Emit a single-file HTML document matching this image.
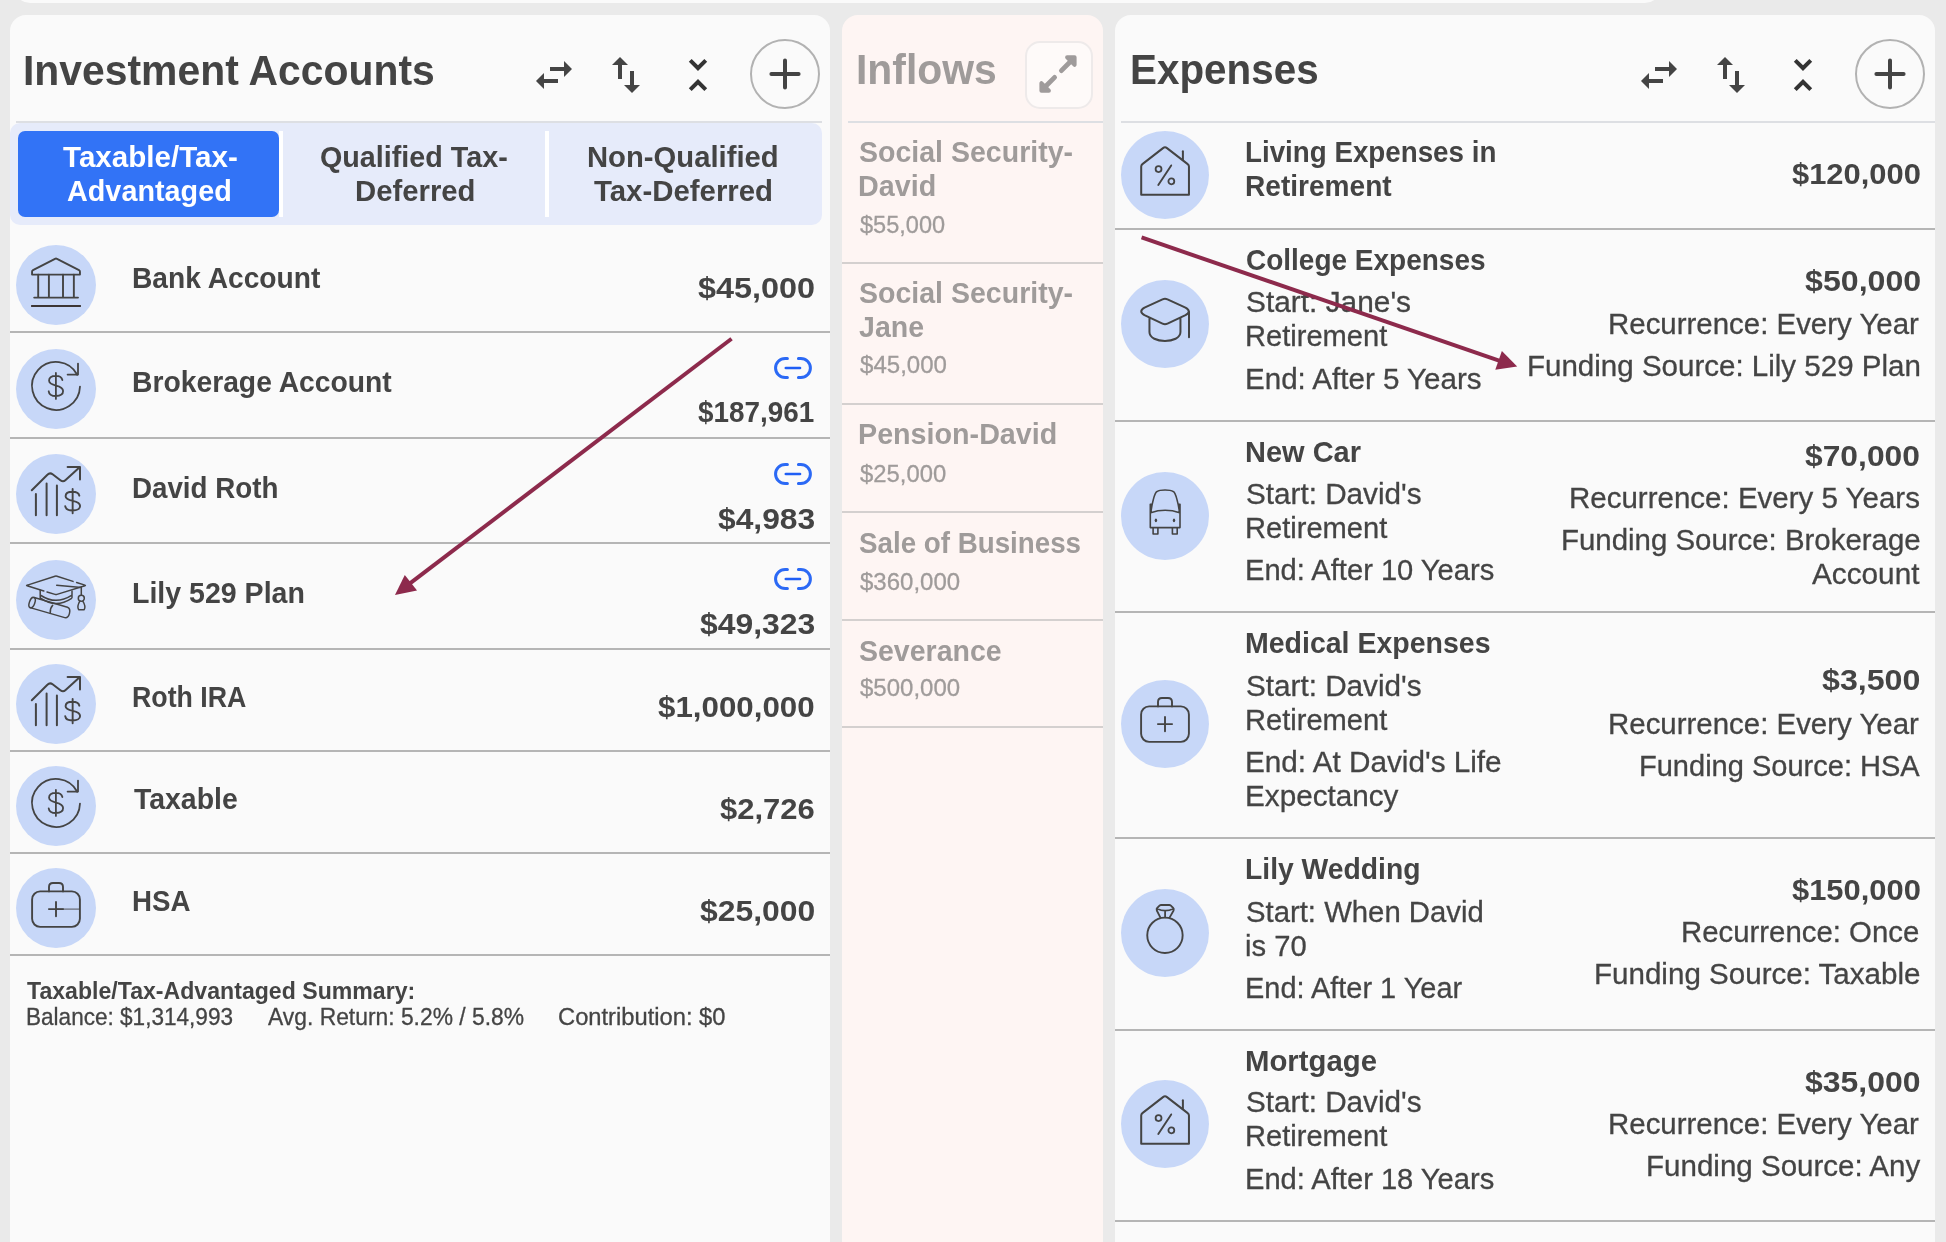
<!DOCTYPE html>
<html><head><meta charset="utf-8"><title>Plan</title>
<style>
html,body{margin:0;padding:0}
body{width:1946px;height:1242px;overflow:hidden;background:#eaeaea;font-family:"Liberation Sans",sans-serif;position:relative}
.t{position:absolute;white-space:nowrap;line-height:1}
.r{-webkit-text-stroke:0.3px}
#tx{position:absolute;left:0;top:0;width:1946px;height:1242px;will-change:transform}
.a{position:absolute}
.sep{position:absolute;height:2px;background:#b5b5b5}
.sep2{position:absolute;height:2px;background:#d4d0cf}
.hd{position:absolute;height:2px;background:#dddfe3}
.c{position:absolute;border-radius:50%;background:#c7d7f8}
svg{position:absolute;overflow:visible}
</style></head><body>
<div class="a" style="left:14px;top:-30px;width:1647px;height:33px;background:#fafafa;border-radius:0 0 16px 16px"></div>
<div class="a" style="left:10px;top:15px;width:820px;height:1260px;background:#fafafa;border-radius:16px"></div>
<div class="a" style="left:842px;top:15px;width:261px;height:1260px;background:#fef5f3;border-radius:16px"></div>
<div class="a" style="left:1115px;top:15px;width:820px;height:1260px;background:#fafafa;border-radius:16px"></div>
<div class="hd" style="left:16px;top:121px;width:806px"></div>
<div class="hd" style="left:848px;top:121px;width:255px"></div>
<div class="hd" style="left:1121px;top:121px;width:814px"></div>
<div class="a" style="left:10px;top:123px;width:812px;height:102px;background:#e6ebfa;border-radius:10px"></div>
<div class="a" style="left:18px;top:131px;width:261px;height:86px;background:#3273f6;border-radius:7px"></div>
<div class="a" style="left:279px;top:131px;width:4px;height:86px;background:#fff"></div>
<div class="a" style="left:545px;top:131px;width:4px;height:86px;background:#fff"></div>
<div class="sep" style="left:10px;top:331px;width:820px"></div>
<div class="sep" style="left:10px;top:437px;width:820px"></div>
<div class="sep" style="left:10px;top:542px;width:820px"></div>
<div class="sep" style="left:10px;top:648px;width:820px"></div>
<div class="sep" style="left:10px;top:750px;width:820px"></div>
<div class="sep" style="left:10px;top:852px;width:820px"></div>
<div class="sep" style="left:10px;top:954px;width:820px"></div>
<div class="sep2" style="left:842px;top:262px;width:261px"></div>
<div class="sep2" style="left:842px;top:403px;width:261px"></div>
<div class="sep2" style="left:842px;top:511px;width:261px"></div>
<div class="sep2" style="left:842px;top:619px;width:261px"></div>
<div class="sep2" style="left:842px;top:726px;width:261px"></div>
<div class="sep" style="left:1115px;top:228px;width:820px"></div>
<div class="sep" style="left:1115px;top:420px;width:820px"></div>
<div class="sep" style="left:1115px;top:611px;width:820px"></div>
<div class="sep" style="left:1115px;top:837px;width:820px"></div>
<div class="sep" style="left:1115px;top:1029px;width:820px"></div>
<div class="sep" style="left:1115px;top:1220px;width:820px"></div>
<svg style="left:530px;top:51px" width="48" height="48" viewBox="0 0 24 24"><path fill="#444" d="M6.99 11L3 15l3.99 4v-3H14v-2H6.99v-3zM21 9l-3.99-4v3H10v2h7.01v3L21 9z"/></svg>
<svg style="left:602px;top:51px" width="48" height="48" viewBox="0 0 24 24"><path fill="#444" d="M16 17.01V10h-2v7.01h-3L15 21l4-3.99h-3zM9 3L5 6.99h3V14h2V6.99h3L9 3z"/></svg>
<svg style="left:674px;top:51px" width="48" height="48" viewBox="0 0 24 24"><path fill="#333" d="M7.41 18.59L8.83 20 12 16.83 15.17 20l1.41-1.41L12 14l-4.59 4.59zm9.18-13.18L15.17 4 12 7.17 8.83 4 7.41 5.41 12 10l4.59-4.59z"/></svg>
<div class="a" style="left:750px;top:39px;width:70px;height:70px;box-sizing:border-box;border:2px solid #b2b2b2;border-radius:50%"></div>
<svg style="left:761px;top:50px" width="48" height="48" viewBox="-24 -24 48 48"><path d="M-13.6 0H13.6M0 -13.6V13.6" stroke="#444" stroke-width="4" stroke-linecap="round" fill="none"/></svg>
<svg style="left:1635px;top:51px" width="48" height="48" viewBox="0 0 24 24"><path fill="#444" d="M6.99 11L3 15l3.99 4v-3H14v-2H6.99v-3zM21 9l-3.99-4v3H10v2h7.01v3L21 9z"/></svg>
<svg style="left:1707px;top:51px" width="48" height="48" viewBox="0 0 24 24"><path fill="#444" d="M16 17.01V10h-2v7.01h-3L15 21l4-3.99h-3zM9 3L5 6.99h3V14h2V6.99h3L9 3z"/></svg>
<svg style="left:1779px;top:51px" width="48" height="48" viewBox="0 0 24 24"><path fill="#333" d="M7.41 18.59L8.83 20 12 16.83 15.17 20l1.41-1.41L12 14l-4.59 4.59zm9.18-13.18L15.17 4 12 7.17 8.83 4 7.41 5.41 12 10l4.59-4.59z"/></svg>
<div class="a" style="left:1855px;top:39px;width:70px;height:70px;box-sizing:border-box;border:2px solid #b2b2b2;border-radius:50%"></div>
<svg style="left:1866px;top:50px" width="48" height="48" viewBox="-24 -24 48 48"><path d="M-13.6 0H13.6M0 -13.6V13.6" stroke="#444" stroke-width="4" stroke-linecap="round" fill="none"/></svg>
<div class="a" style="left:1025px;top:41px;width:68px;height:68px;box-sizing:border-box;border:2.5px solid #eeeaea;border-radius:15px;background:#fefaf9"></div>
<svg style="left:1034.2px;top:50.150000000000006px" width="48" height="48" viewBox="-24 -24 48 48"><path d="M3.4 -3.4L13 -13M-3.4 3.4L-13 13" stroke="#9f9b9b" stroke-width="4.8" stroke-linecap="round" fill="none"/><path d="M16.6 -16.7H9.1L16.6 -9.2ZM-16.6 16.7H-9.1L-16.6 9.2Z" fill="#9f9b9b" stroke="#9f9b9b" stroke-width="4" stroke-linejoin="round"/></svg>
<div class="c" style="left:16px;top:245px;width:80px;height:80px"></div>
<svg style="left:16px;top:245px" width="80" height="80" viewBox="-40 -40 80 80"><path d="M-23.95 -10.4V-13.2Q-23.95 -14.3 -23 -14.8L-1 -26.2Q0 -26.7 1 -26.2L23 -14.8Q23.95 -14.3 23.95 -13.2V-10.4Z" stroke="#444" stroke-width="1.9" fill="none" stroke-linecap="round" stroke-linejoin="round"/><path d="M-17.8 -10.4V12.6M-7.1 -10.4V12.6M7 -10.4V12.6M17.85 -10.4V12.6M-21.8 12.6H22" stroke="#444" stroke-width="1.9" fill="none" stroke-linecap="round" stroke-linejoin="round" stroke-linecap="butt"/><path d="M-24.9 21H24.9" stroke="#3c3535" stroke-width="2" fill="none"/></svg>
<div class="c" style="left:16px;top:349px;width:80px;height:80px"></div>
<svg style="left:16px;top:349px" width="80" height="80" viewBox="-40 -40 80 80"><path d="M23.99 -2.47A24 24 0 1 1 21.25 -14.26" stroke="#444" stroke-width="1.8" fill="none" stroke-linecap="round" stroke-linejoin="round"/><path d="M22 -25.4V-14.4H11.6" stroke="#444" stroke-width="1.8" fill="none" stroke-linecap="round" stroke-linejoin="round"/><g transform="translate(-0.1,-3.1)"><path d="M6.48 -5.88C5.85 -8.82 3.42 -10.08 0 -10.08C-4.14 -10.08 -6.84 -8.23 -6.84 -5.38C-6.84 -2.52 -4.14 -1.34 0 -0.34C4.32 0.67 7.20 1.85 7.20 5.21C7.20 8.23 4.32 10.08 0 10.08C-4.14 10.08 -6.84 8.40 -7.20 5.38M0 -13.02V13.02" stroke="#444" stroke-width="1.8" fill="none" stroke-linecap="round" stroke-linejoin="round"/></g></svg>
<div class="c" style="left:16px;top:454px;width:80px;height:80px"></div>
<svg style="left:16px;top:454px" width="80" height="80" viewBox="-40 -40 80 80"><path d="M-24.2 -3.7L-8.6 -19.3Q-6.1 -21.8 -3.4 -19.7L4.4 -13.7Q7.1 -11.6 9.6 -13.9L23.6 -26.8M11.6 -27.1H24V-14.5M-20.1 0V21.2M-9.4 -10.5V21.2M0.9 -8.4V21.2" stroke="#444" stroke-width="2" fill="none" stroke-linecap="round" stroke-linejoin="round"/><g transform="translate(16.65,7.15)"><path d="M6.70 -5.46C6.04 -8.19 3.53 -9.36 0 -9.36C-4.28 -9.36 -7.07 -7.64 -7.07 -4.99C-7.07 -2.34 -4.28 -1.25 0 -0.31C4.46 0.62 7.44 1.72 7.44 4.84C7.44 7.64 4.46 9.36 0 9.36C-4.28 9.36 -7.07 7.80 -7.44 4.99M0 -12.09V12.09" stroke="#444" stroke-width="1.9" fill="none" stroke-linecap="round" stroke-linejoin="round"/></g></svg>
<div class="c" style="left:16px;top:560px;width:80px;height:80px"></div>
<svg style="left:16px;top:560px" width="80" height="80" viewBox="-40 -40 80 80"><path d="M-29.3 -14.6L-1 -23.8Q0 -24.1 1 -23.8L17 -18.6M20.6 -17.5L28.9 -14.9Q29.9 -14.6 28.9 -14.3L1 -5.6Q0 -5.3 -1 -5.6L-9 -8M-12.2 -9L-28.9 -14.3Q-29.9 -14.6 -28.9 -14.9" stroke="#444" stroke-width="1.5" fill="none" stroke-linecap="round" stroke-linejoin="round"/><path d="M0.7 -14.7L25.3 -12.6V-4.7" stroke="#444" stroke-width="1.5" fill="none" stroke-linecap="round" stroke-linejoin="round"/><circle cx="25.3" cy="-1.7" r="3" stroke="#444" stroke-width="1.5" fill="none" stroke-linecap="round" stroke-linejoin="round"/><path d="M23.8 1.2C21.6 5 21.6 8 22.6 9.7H28.2C29.2 8 29.2 5 26.8 1.2" stroke="#444" stroke-width="1.5" fill="none" stroke-linecap="round" stroke-linejoin="round"/><path d="M-15.8 -9.7V-0.9M16 -8.9V-2.5M-15 -4.5Q0 5.3 16 -4.9M-15 -1.7Q0 8.7 15.6 -1.7" stroke="#444" stroke-width="1.5" fill="none" stroke-linecap="round" stroke-linejoin="round"/><path d="M-21.8 -2.5L11.5 7.2C15.6 8.5 13.6 19 8.75 17.6L-25.9 7.6" stroke="#444" stroke-width="1.5" fill="none" stroke-linecap="round" stroke-linejoin="round"/><ellipse cx="-23.9" cy="2.6" rx="2.7" ry="5.4" transform="rotate(20 -23.9 2.6)" stroke="#444" stroke-width="1.5" fill="none" stroke-linecap="round" stroke-linejoin="round"/><path d="M-3.3 5.2Q-6.2 8.5 -5.7 12.8" stroke="#444" stroke-width="1.5" fill="none" stroke-linecap="round" stroke-linejoin="round"/></svg>
<div class="c" style="left:16px;top:664px;width:80px;height:80px"></div>
<svg style="left:16px;top:664px" width="80" height="80" viewBox="-40 -40 80 80"><path d="M-24.2 -3.7L-8.6 -19.3Q-6.1 -21.8 -3.4 -19.7L4.4 -13.7Q7.1 -11.6 9.6 -13.9L23.6 -26.8M11.6 -27.1H24V-14.5M-20.1 0V21.2M-9.4 -10.5V21.2M0.9 -8.4V21.2" stroke="#444" stroke-width="2" fill="none" stroke-linecap="round" stroke-linejoin="round"/><g transform="translate(16.65,7.15)"><path d="M6.70 -5.46C6.04 -8.19 3.53 -9.36 0 -9.36C-4.28 -9.36 -7.07 -7.64 -7.07 -4.99C-7.07 -2.34 -4.28 -1.25 0 -0.31C4.46 0.62 7.44 1.72 7.44 4.84C7.44 7.64 4.46 9.36 0 9.36C-4.28 9.36 -7.07 7.80 -7.44 4.99M0 -12.09V12.09" stroke="#444" stroke-width="1.9" fill="none" stroke-linecap="round" stroke-linejoin="round"/></g></svg>
<div class="c" style="left:16px;top:766px;width:80px;height:80px"></div>
<svg style="left:16px;top:766px" width="80" height="80" viewBox="-40 -40 80 80"><path d="M23.99 -2.47A24 24 0 1 1 21.25 -14.26" stroke="#444" stroke-width="1.8" fill="none" stroke-linecap="round" stroke-linejoin="round"/><path d="M22 -25.4V-14.4H11.6" stroke="#444" stroke-width="1.8" fill="none" stroke-linecap="round" stroke-linejoin="round"/><g transform="translate(-0.1,-3.1)"><path d="M6.48 -5.88C5.85 -8.82 3.42 -10.08 0 -10.08C-4.14 -10.08 -6.84 -8.23 -6.84 -5.38C-6.84 -2.52 -4.14 -1.34 0 -0.34C4.32 0.67 7.20 1.85 7.20 5.21C7.20 8.23 4.32 10.08 0 10.08C-4.14 10.08 -6.84 8.40 -7.20 5.38M0 -13.02V13.02" stroke="#444" stroke-width="1.8" fill="none" stroke-linecap="round" stroke-linejoin="round"/></g></svg>
<div class="c" style="left:16px;top:868px;width:80px;height:80px"></div>
<svg style="left:16px;top:868px" width="80" height="80" viewBox="-40 -40 80 80"><rect x="-23.9" y="-16.6" width="47.8" height="35.45" rx="8" stroke="#444" stroke-width="1.9" fill="none" stroke-linecap="round" stroke-linejoin="round"/><path d="M-7 -16.6V-21.0Q-7 -25.0 -3 -25.0H3Q7 -25.0 7 -21.0V-16.6M-7.1 1.1H7.1M0 -6.0V8.2" stroke="#444" stroke-width="1.9" fill="none" stroke-linecap="round" stroke-linejoin="round"/><path d="M0 1.1H23.9" stroke="#444" stroke-width="0.9"/></svg>
<div class="c" style="left:1121px;top:131px;width:88px;height:88px"></div>
<svg style="left:1121px;top:131px" width="88" height="88" viewBox="-44 -44 88 88"><path d="M-23.8 19.85V-8.6Q-23.8 -10 -22.6 -10.9L-2 -26.9Q0 -28.4 2 -26.9L22.7 -10.9Q23.95 -10 23.95 -8.6V19.85Z" stroke="#444" stroke-width="2" fill="none" stroke-linecap="round" stroke-linejoin="round" stroke-linejoin="miter"/><path d="M17.9 -23.7V-15" stroke="#444" stroke-width="2" fill="none" stroke-linecap="round" stroke-linejoin="round"/><circle cx="-6.45" cy="-5.9" r="2.95" stroke="#444" stroke-width="1.8" fill="none" stroke-linecap="round" stroke-linejoin="round"/><circle cx="6.35" cy="6.35" r="2.95" stroke="#444" stroke-width="1.8" fill="none" stroke-linecap="round" stroke-linejoin="round"/><path d="M6.2 -9.6L-6.7 9.9" stroke="#444" stroke-width="1.9" fill="none" stroke-linecap="round" stroke-linejoin="round"/></svg>
<div class="c" style="left:1121px;top:280px;width:88px;height:88px"></div>
<svg style="left:1121px;top:280px" width="88" height="88" viewBox="-44 -44 88 88"><path d="M-2.5 -24.7L-20.5 -16.3Q-27 -12.6 -20.5 -8.9L-2.5 -0.3Q0 0.9 2.5 -0.3L20.5 -8.9Q27 -12.6 20.5 -16.3L2.5 -24.7Q0 -25.9 -2.5 -24.7Z M-15.55 -6.3V8C-15.55 20 15.45 20 15.45 8V-6.3 M24 -12.5V13.2" stroke="#444" stroke-width="2" fill="none" stroke-linecap="round" stroke-linejoin="round"/></svg>
<div class="c" style="left:1121px;top:472px;width:88px;height:88px"></div>
<svg style="left:1121px;top:472px" width="88" height="88" viewBox="-44 -44 88 88"><path d="M-14.7 -11.7V11.6H15V-11.7 M-14.7 -11.7H-13L-14.3 -5.5 M15 -11.7H13.3L14.6 -5.5 M-14 -4C-13.5 -10 -10.5 -23.6 -8 -24.4C-5 -26.5 5 -26.5 8.3 -24.4C10.8 -23.6 13.8 -10 14.4 -4 M-14.3 -3.3Q0.15 -8.1 14.65 -3.3 M-11.9 11.6V18H-7.1V11.6 M7.4 11.6V18H12.2V11.6" stroke="#444" stroke-width="1.6" fill="none" stroke-linecap="round" stroke-linejoin="round"/><ellipse cx="-9.1" cy="4.35" rx="1.2" ry="1.9" fill="#444"/><ellipse cx="9" cy="4.35" rx="1.2" ry="1.9" fill="#444"/></svg>
<div class="c" style="left:1121px;top:680px;width:88px;height:88px"></div>
<svg style="left:1121px;top:680px" width="88" height="88" viewBox="-44 -44 88 88"><rect x="-23.9" y="-17.6" width="47.8" height="35.45" rx="8" stroke="#444" stroke-width="1.9" fill="none" stroke-linecap="round" stroke-linejoin="round"/><path d="M-7 -17.6V-22.0Q-7 -26.0 -3 -26.0H3Q7 -26.0 7 -22.0V-17.6M-7.1 0.1H7.1M0 -7.0V7.2" stroke="#444" stroke-width="1.9" fill="none" stroke-linecap="round" stroke-linejoin="round"/></svg>
<div class="c" style="left:1121px;top:889px;width:88px;height:88px"></div>
<svg style="left:1121px;top:889px" width="88" height="88" viewBox="-44 -44 88 88"><circle cx="-0.05" cy="2.3" r="17.7" stroke="#444" stroke-width="1.9" fill="none" stroke-linecap="round" stroke-linejoin="round"/><path d="M-4.7 -15.6L-8.2 -22.5Q-8.8 -24 -7.8 -25L-5.5 -27.3Q-4.8 -28 -3.8 -28H4.2Q5.2 -28 5.9 -27.3L8.2 -25Q9.2 -24 8.6 -22.5L4.7 -15.6 M-7.8 -24.3Q0.15 -20.3 8.3 -24.3 M0.1 -22.3V-15.7" stroke="#444" stroke-width="1.8" fill="none" stroke-linecap="round" stroke-linejoin="round"/></svg>
<div class="c" style="left:1121px;top:1080px;width:88px;height:88px"></div>
<svg style="left:1121px;top:1080px" width="88" height="88" viewBox="-44 -44 88 88"><path d="M-23.8 19.85V-8.6Q-23.8 -10 -22.6 -10.9L-2 -26.9Q0 -28.4 2 -26.9L22.7 -10.9Q23.95 -10 23.95 -8.6V19.85Z" stroke="#444" stroke-width="2" fill="none" stroke-linecap="round" stroke-linejoin="round" stroke-linejoin="miter"/><path d="M17.9 -23.7V-15" stroke="#444" stroke-width="2" fill="none" stroke-linecap="round" stroke-linejoin="round"/><circle cx="-6.45" cy="-5.9" r="2.95" stroke="#444" stroke-width="1.8" fill="none" stroke-linecap="round" stroke-linejoin="round"/><circle cx="6.35" cy="6.35" r="2.95" stroke="#444" stroke-width="1.8" fill="none" stroke-linecap="round" stroke-linejoin="round"/><path d="M6.2 -9.6L-6.7 9.9" stroke="#444" stroke-width="1.9" fill="none" stroke-linecap="round" stroke-linejoin="round"/></svg>
<svg style="left:769.1px;top:352px" width="48" height="32" viewBox="-24 -16 48 32"><path d="M-5.6 -9.6H-7.85A9.6 9.6 0 0 0 -7.85 9.6H-5.6M5.4 -9.6H7.8A9.6 9.6 0 0 1 7.8 9.6H5.4" stroke="#2b69f5" stroke-width="3" fill="none" stroke-linecap="round"/><path d="M-7.2 0H7" stroke="#1f5ef5" stroke-width="2.6" fill="none" stroke-linecap="round"/></svg>
<svg style="left:769.1px;top:458px" width="48" height="32" viewBox="-24 -16 48 32"><path d="M-5.6 -9.6H-7.85A9.6 9.6 0 0 0 -7.85 9.6H-5.6M5.4 -9.6H7.8A9.6 9.6 0 0 1 7.8 9.6H5.4" stroke="#2b69f5" stroke-width="3" fill="none" stroke-linecap="round"/><path d="M-7.2 0H7" stroke="#1f5ef5" stroke-width="2.6" fill="none" stroke-linecap="round"/></svg>
<svg style="left:769.1px;top:563px" width="48" height="32" viewBox="-24 -16 48 32"><path d="M-5.6 -9.6H-7.85A9.6 9.6 0 0 0 -7.85 9.6H-5.6M5.4 -9.6H7.8A9.6 9.6 0 0 1 7.8 9.6H5.4" stroke="#2b69f5" stroke-width="3" fill="none" stroke-linecap="round"/><path d="M-7.2 0H7" stroke="#1f5ef5" stroke-width="2.6" fill="none" stroke-linecap="round"/></svg>
<div id="tx">
<div class="t" id="t0" style="left:23.00px;top:49.79px;font-size:41.60px;font-weight:700;color:#444444;transform-origin:0 0;transform:scaleX(0.9825)">Investment Accounts</div>
<div class="t" id="t1" style="left:62.50px;top:141.88px;font-size:29.68px;font-weight:700;color:#ffffff;transform-origin:0 0;transform:scaleX(0.9972)">Taxable/Tax-</div>
<div class="t" id="t2" style="left:67.00px;top:176.13px;font-size:29.68px;font-weight:700;color:#ffffff;transform-origin:0 0;transform:scaleX(0.9701)">Advantaged</div>
<div class="t" id="t3" style="left:320.00px;top:141.88px;font-size:29.68px;font-weight:700;color:#444444;transform-origin:0 0;transform:scaleX(0.9675)">Qualified Tax-</div>
<div class="t" id="t4" style="left:354.50px;top:176.13px;font-size:29.68px;font-weight:700;color:#444444;transform-origin:0 0;transform:scaleX(0.9873)">Deferred</div>
<div class="t" id="t5" style="left:586.50px;top:141.88px;font-size:29.68px;font-weight:700;color:#444444;transform-origin:0 0;transform:scaleX(0.9856)">Non-Qualified</div>
<div class="t" id="t6" style="left:593.50px;top:176.13px;font-size:29.68px;font-weight:700;color:#444444;transform-origin:0 0;transform:scaleX(0.9902)">Tax-Deferred</div>
<div class="t" id="t7" style="left:132.00px;top:262.88px;font-size:29.68px;font-weight:700;color:#444444;transform-origin:0 0;transform:scaleX(0.9490)">Bank Account</div>
<div class="t" id="t8" style="left:132.00px;top:366.88px;font-size:29.68px;font-weight:700;color:#444444;transform-origin:0 0;transform:scaleX(0.9528)">Brokerage Account</div>
<div class="t" id="t9" style="left:132.00px;top:472.88px;font-size:29.68px;font-weight:700;color:#444444;transform-origin:0 0;transform:scaleX(0.9346)">David Roth</div>
<div class="t" id="t10" style="left:132.00px;top:578.13px;font-size:29.68px;font-weight:700;color:#444444;transform-origin:0 0;transform:scaleX(0.9617)">Lily 529 Plan</div>
<div class="t" id="t11" style="left:132.00px;top:681.88px;font-size:29.68px;font-weight:700;color:#444444;transform-origin:0 0;transform:scaleX(0.9012)">Roth IRA</div>
<div class="t" id="t12" style="left:134.00px;top:783.63px;font-size:29.68px;font-weight:700;color:#444444;transform-origin:0 0;transform:scaleX(0.9580)">Taxable</div>
<div class="t" id="t13" style="left:132.00px;top:885.63px;font-size:29.68px;font-weight:700;color:#444444;transform-origin:0 0;transform:scaleX(0.9333)">HSA</div>
<div class="t" id="t14" style="left:698.00px;top:272.88px;font-size:29.68px;font-weight:700;color:#444444;transform-origin:0 0;transform:scaleX(1.0905)">$45,000</div>
<div class="t" id="t15" style="left:698.00px;top:397.38px;font-size:29.68px;font-weight:700;color:#444444;transform-origin:0 0;transform:scaleX(0.9386)">$187,961</div>
<div class="t" id="t16" style="left:717.50px;top:503.63px;font-size:29.68px;font-weight:700;color:#444444;transform-origin:0 0;transform:scaleX(1.0703)">$4,983</div>
<div class="t" id="t17" style="left:699.50px;top:608.63px;font-size:29.68px;font-weight:700;color:#444444;transform-origin:0 0;transform:scaleX(1.0738)">$49,323</div>
<div class="t" id="t18" style="left:658.00px;top:691.63px;font-size:29.68px;font-weight:700;color:#444444;transform-origin:0 0;transform:scaleX(1.0545)">$1,000,000</div>
<div class="t" id="t19" style="left:719.50px;top:794.13px;font-size:29.68px;font-weight:700;color:#444444;transform-origin:0 0;transform:scaleX(1.0427)">$2,726</div>
<div class="t" id="t20" style="left:699.50px;top:896.13px;font-size:29.68px;font-weight:700;color:#444444;transform-origin:0 0;transform:scaleX(1.0738)">$25,000</div>
<div class="t" id="t21" style="left:26.50px;top:978.51px;font-size:24.20px;font-weight:700;color:#444444;transform-origin:0 0;transform:scaleX(0.9554)">Taxable/Tax-Advantaged Summary:</div>
<div class="t r" id="t22" style="left:25.50px;top:1004.51px;font-size:24.20px;font-weight:400;color:#444444;transform-origin:0 0;transform:scaleX(0.9327)">Balance: $1,314,993</div>
<div class="t r" id="t23" style="left:267.50px;top:1004.51px;font-size:24.20px;font-weight:400;color:#444444;transform-origin:0 0;transform:scaleX(0.9444)">Avg. Return: 5.2% / 5.8%</div>
<div class="t r" id="t24" style="left:558.00px;top:1004.51px;font-size:24.20px;font-weight:400;color:#444444;transform-origin:0 0;transform:scaleX(0.9805)">Contribution: $0</div>
<div class="t" id="t25" style="left:856.00px;top:48.54px;font-size:41.60px;font-weight:700;color:#9f9b9a;transform-origin:0 0;transform:scaleX(0.9821)">Inflows</div>
<div class="t" id="t26" style="left:858.60px;top:137.38px;font-size:29.68px;font-weight:700;color:#9f9b9a;transform-origin:0 0;transform:scaleX(0.9614)">Social Security-</div>
<div class="t" id="t27" style="left:857.60px;top:171.13px;font-size:29.68px;font-weight:700;color:#9f9b9a;transform-origin:0 0;transform:scaleX(0.9676)">David</div>
<div class="t r" id="t28" style="left:859.60px;top:212.51px;font-size:24.20px;font-weight:400;color:#9f9b9a;transform-origin:0 0;transform:scaleX(0.9739)">$55,000</div>
<div class="t" id="t29" style="left:858.60px;top:277.88px;font-size:29.68px;font-weight:700;color:#9f9b9a;transform-origin:0 0;transform:scaleX(0.9614)">Social Security-</div>
<div class="t" id="t30" style="left:858.60px;top:311.88px;font-size:29.68px;font-weight:700;color:#9f9b9a;transform-origin:0 0;transform:scaleX(0.9623)">Jane</div>
<div class="t r" id="t31" style="left:859.60px;top:352.76px;font-size:24.20px;font-weight:400;color:#9f9b9a;transform-origin:0 0;transform:scaleX(0.9943)">$45,000</div>
<div class="t" id="t32" style="left:857.60px;top:419.38px;font-size:29.68px;font-weight:700;color:#9f9b9a;transform-origin:0 0;transform:scaleX(0.9668)">Pension-David</div>
<div class="t r" id="t33" style="left:859.60px;top:461.51px;font-size:24.20px;font-weight:400;color:#9f9b9a;transform-origin:0 0;transform:scaleX(0.9855)">$25,000</div>
<div class="t" id="t34" style="left:858.60px;top:527.88px;font-size:29.68px;font-weight:700;color:#9f9b9a;transform-origin:0 0;transform:scaleX(0.9351)">Sale of Business</div>
<div class="t r" id="t35" style="left:859.60px;top:569.51px;font-size:24.20px;font-weight:400;color:#9f9b9a;transform-origin:0 0;transform:scaleX(0.9925)">$360,000</div>
<div class="t" id="t36" style="left:858.60px;top:636.13px;font-size:29.68px;font-weight:700;color:#9f9b9a;transform-origin:0 0;transform:scaleX(0.9606)">Severance</div>
<div class="t r" id="t37" style="left:859.60px;top:675.76px;font-size:24.20px;font-weight:400;color:#9f9b9a;transform-origin:0 0;transform:scaleX(0.9925)">$500,000</div>
<div class="t" id="t38" style="left:1129.50px;top:48.54px;font-size:41.60px;font-weight:700;color:#444444;transform-origin:0 0;transform:scaleX(0.9711)">Expenses</div>
<div class="t" id="t39" style="left:1245.00px;top:137.38px;font-size:29.68px;font-weight:700;color:#444444;transform-origin:0 0;transform:scaleX(0.9352)">Living Expenses in</div>
<div class="t" id="t40" style="left:1245.00px;top:171.13px;font-size:29.68px;font-weight:700;color:#444444;transform-origin:0 0;transform:scaleX(0.9461)">Retirement</div>
<div class="t" id="t41" style="left:1792.00px;top:159.13px;font-size:29.68px;font-weight:700;color:#444444;transform-origin:0 0;transform:scaleX(1.0415)">$120,000</div>
<div class="t" id="t42" style="left:1246.00px;top:244.88px;font-size:29.68px;font-weight:700;color:#444444;transform-origin:0 0;transform:scaleX(0.9432)">College Expenses</div>
<div class="t r" id="t43" style="left:1246.00px;top:287.38px;font-size:29.68px;font-weight:400;color:#444444;transform-origin:0 0;transform:scaleX(1.0062)">Start: Jane's</div>
<div class="t r" id="t44" style="left:1245.00px;top:321.38px;font-size:29.68px;font-weight:400;color:#444444;transform-origin:0 0;transform:scaleX(0.9807)">Retirement</div>
<div class="t r" id="t45" style="left:1245.00px;top:363.63px;font-size:29.68px;font-weight:400;color:#444444;transform-origin:0 0;transform:scaleX(0.9957)">End: After 5 Years</div>
<div class="t" id="t46" style="left:1804.50px;top:266.13px;font-size:29.68px;font-weight:700;color:#444444;transform-origin:0 0;transform:scaleX(1.0834)">$50,000</div>
<div class="t r" id="t47" style="left:1608.00px;top:309.38px;font-size:29.68px;font-weight:400;color:#444444;transform-origin:0 0;transform:scaleX(0.9920)">Recurrence: Every Year</div>
<div class="t r" id="t48" style="left:1527.00px;top:351.13px;font-size:29.68px;font-weight:400;color:#444444;transform-origin:0 0;transform:scaleX(0.9949)">Funding Source: Lily 529 Plan</div>
<div class="t" id="t49" style="left:1245.00px;top:436.63px;font-size:29.68px;font-weight:700;color:#444444;transform-origin:0 0;transform:scaleX(0.9766)">New Car</div>
<div class="t r" id="t50" style="left:1246.00px;top:478.63px;font-size:29.68px;font-weight:400;color:#444444;transform-origin:0 0;transform:scaleX(1.0001)">Start: David's</div>
<div class="t r" id="t51" style="left:1245.00px;top:513.38px;font-size:29.68px;font-weight:400;color:#444444;transform-origin:0 0;transform:scaleX(0.9807)">Retirement</div>
<div class="t r" id="t52" style="left:1245.00px;top:554.88px;font-size:29.68px;font-weight:400;color:#444444;transform-origin:0 0;transform:scaleX(0.9811)">End: After 10 Years</div>
<div class="t" id="t53" style="left:1805.00px;top:441.13px;font-size:29.68px;font-weight:700;color:#444444;transform-origin:0 0;transform:scaleX(1.0715)">$70,000</div>
<div class="t r" id="t54" style="left:1569.00px;top:482.88px;font-size:29.68px;font-weight:400;color:#444444;transform-origin:0 0;transform:scaleX(0.9943)">Recurrence: Every 5 Years</div>
<div class="t r" id="t55" style="left:1560.50px;top:524.88px;font-size:29.68px;font-weight:400;color:#444444;transform-origin:0 0;transform:scaleX(0.9910)">Funding Source: Brokerage</div>
<div class="t r" id="t56" style="left:1811.50px;top:558.63px;font-size:29.68px;font-weight:400;color:#444444;transform-origin:0 0;transform:scaleX(1.0024)">Account</div>
<div class="t" id="t57" style="left:1245.00px;top:627.88px;font-size:29.68px;font-weight:700;color:#444444;transform-origin:0 0;transform:scaleX(0.9605)">Medical Expenses</div>
<div class="t r" id="t58" style="left:1246.00px;top:670.63px;font-size:29.68px;font-weight:400;color:#444444;transform-origin:0 0;transform:scaleX(1.0001)">Start: David's</div>
<div class="t r" id="t59" style="left:1245.00px;top:705.38px;font-size:29.68px;font-weight:400;color:#444444;transform-origin:0 0;transform:scaleX(0.9807)">Retirement</div>
<div class="t r" id="t60" style="left:1245.00px;top:746.63px;font-size:29.68px;font-weight:400;color:#444444;transform-origin:0 0;transform:scaleX(1.0010)">End: At David's Life</div>
<div class="t r" id="t61" style="left:1245.00px;top:781.38px;font-size:29.68px;font-weight:400;color:#444444;transform-origin:0 0;transform:scaleX(1.0000)">Expectancy</div>
<div class="t" id="t62" style="left:1822.00px;top:665.38px;font-size:29.68px;font-weight:700;color:#444444;transform-origin:0 0;transform:scaleX(1.0844)">$3,500</div>
<div class="t r" id="t63" style="left:1608.00px;top:708.63px;font-size:29.68px;font-weight:400;color:#444444;transform-origin:0 0;transform:scaleX(0.9920)">Recurrence: Every Year</div>
<div class="t r" id="t64" style="left:1638.50px;top:750.63px;font-size:29.68px;font-weight:400;color:#444444;transform-origin:0 0;transform:scaleX(0.9781)">Funding Source: HSA</div>
<div class="t" id="t65" style="left:1245.00px;top:853.63px;font-size:29.68px;font-weight:700;color:#444444;transform-origin:0 0;transform:scaleX(0.9531)">Lily Wedding</div>
<div class="t r" id="t66" style="left:1246.00px;top:896.63px;font-size:29.68px;font-weight:400;color:#444444;transform-origin:0 0;transform:scaleX(0.9874)">Start: When David</div>
<div class="t r" id="t67" style="left:1245.00px;top:930.63px;font-size:29.68px;font-weight:400;color:#444444;transform-origin:0 0;transform:scaleX(0.9833)">is 70</div>
<div class="t r" id="t68" style="left:1245.00px;top:973.13px;font-size:29.68px;font-weight:400;color:#444444;transform-origin:0 0;transform:scaleX(0.9750)">End: After 1 Year</div>
<div class="t" id="t69" style="left:1792.00px;top:874.88px;font-size:29.68px;font-weight:700;color:#444444;transform-origin:0 0;transform:scaleX(1.0415)">$150,000</div>
<div class="t r" id="t70" style="left:1681.00px;top:917.38px;font-size:29.68px;font-weight:400;color:#444444;transform-origin:0 0;transform:scaleX(0.9895)">Recurrence: Once</div>
<div class="t r" id="t71" style="left:1593.50px;top:959.38px;font-size:29.68px;font-weight:400;color:#444444;transform-origin:0 0;transform:scaleX(0.9962)">Funding Source: Taxable</div>
<div class="t" id="t72" style="left:1245.00px;top:1045.63px;font-size:29.68px;font-weight:700;color:#444444;transform-origin:0 0;transform:scaleX(0.9886)">Mortgage</div>
<div class="t r" id="t73" style="left:1246.00px;top:1087.38px;font-size:29.68px;font-weight:400;color:#444444;transform-origin:0 0;transform:scaleX(1.0001)">Start: David's</div>
<div class="t r" id="t74" style="left:1245.00px;top:1121.38px;font-size:29.68px;font-weight:400;color:#444444;transform-origin:0 0;transform:scaleX(0.9807)">Retirement</div>
<div class="t r" id="t75" style="left:1245.00px;top:1163.88px;font-size:29.68px;font-weight:400;color:#444444;transform-origin:0 0;transform:scaleX(0.9811)">End: After 18 Years</div>
<div class="t" id="t76" style="left:1805.00px;top:1066.88px;font-size:29.68px;font-weight:700;color:#444444;transform-origin:0 0;transform:scaleX(1.0762)">$35,000</div>
<div class="t r" id="t77" style="left:1608.00px;top:1108.63px;font-size:29.68px;font-weight:400;color:#444444;transform-origin:0 0;transform:scaleX(0.9920)">Recurrence: Every Year</div>
<div class="t r" id="t78" style="left:1645.50px;top:1150.63px;font-size:29.68px;font-weight:400;color:#444444;transform-origin:0 0;transform:scaleX(0.9955)">Funding Source: Any</div>
</div>
<svg style="left:0;top:0" width="1946" height="1242" viewBox="0 0 1946 1242"><path d="M731.56 338.78L409.3 583.9" stroke="#8d2a4c" stroke-width="4" fill="none"/><path d="M394.98 594.94L404.8 574.98L417.04 590.43Z" fill="#8d2a4c"/><path d="M1141.58 237.46L1500.5 361.1" stroke="#8d2a4c" stroke-width="4" fill="none"/><path d="M1517.18 366.57L1501.88 351.11L1495.28 369.79Z" fill="#8d2a4c"/></svg>
</body></html>
